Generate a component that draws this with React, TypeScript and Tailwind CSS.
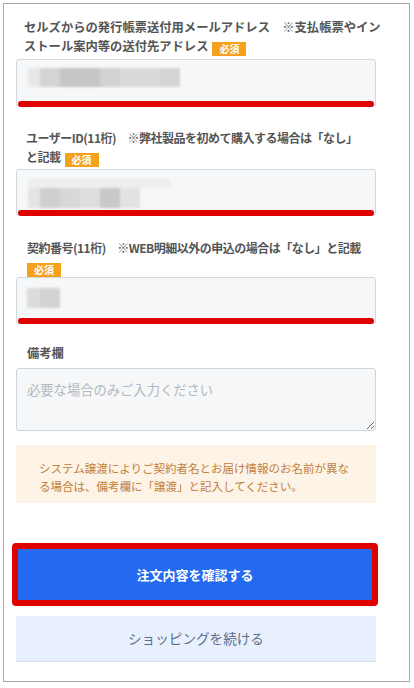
import React from 'react';

function Badge() {
  return (
    <span className="ml-[4px] inline-block h-[14px] bg-[#f5a11c] px-[7px] align-[-2px] text-[10px] font-bold leading-[14px] tracking-normal text-white">
      必須
    </span>
  );
}

function RedBar() {
  return <div className="absolute bottom-[-1px] left-[1px] right-[1px] h-[6px] rounded-[3px] bg-[#df0000]" />;
}

export default function App() {
  return (
    <div className="h-[688px] w-[414px] bg-white pl-[3px] pt-[3px] font-['Noto_Sans_CJK_JP',sans-serif]">
      <div className="h-[679px] w-[407px] border border-[#a9a9a9] pl-[12px] pt-[14px]">
        <div className="flex w-[360px] flex-col">
          {/* Mail address */}
          <p className="h-[38px] whitespace-nowrap pl-[8px] text-[12.3px] font-bold leading-[19px] text-[#555]">
            セルズからの発行帳票送付用メールアドレス　※支払帳票やイン
            <br />
            ストール案内等の送付先アドレス
            <Badge />
          </p>
          <div className="relative mt-[3px] h-[48px] rounded-[3px] border border-[#d3d8dc] bg-[#f5f7f8] pl-[11px] pt-[8px]">
            <div className="flex h-[19px] blur-[1px]">
              <div className="w-[12px] bg-[#e8e8e8]" />
              <div className="w-[20px] bg-[#d4d4d4]" />
              <div className="w-[40px] bg-[#c6c6c6]" />
              <div className="w-[20px] bg-[#d2d2d2]" />
              <div className="w-[40px] bg-[#dadada]" />
              <div className="w-[20px] bg-[#d4d4d4]" />
            </div>
            <RedBar />
          </div>

          {/* User ID */}
          <p className="mt-[21px] h-[38px] whitespace-nowrap pl-[10px] text-[12px] font-bold leading-[19px] tracking-[-0.5px] text-[#555]">
            ユーザーID(11桁)　※弊社製品を初めて購入する場合は「なし」
            <br />
            と記載
            <Badge />
          </p>
          <div className="relative mt-[3px] h-[47px] rounded-[3px] border border-[#d3d8dc] bg-[#f5f7f8] pl-[11px] pt-[9px]">
            <div className="flex flex-col blur-[1px]">
              <div className="h-[9px] w-[142px] bg-[#eeeeee]" />
              <div className="flex h-[20px]">
                <div className="w-[12px] bg-[#e4e4e4]" />
                <div className="w-[20px] bg-[#cfcfcf]" />
                <div className="w-[20px] bg-[#d8d8d8]" />
                <div className="w-[20px] bg-[#dedede]" />
                <div className="w-[20px] bg-[#c9c9c9]" />
                <div className="w-[20px] bg-[#e2e2e2]" />
              </div>
            </div>
            <RedBar />
          </div>

          {/* Contract number */}
          <p className="mt-[22px] h-[38px] whitespace-nowrap pl-[11px] text-[12px] font-bold leading-[19px] tracking-[-0.5px] text-[#555]">
            契約番号(11桁)　※WEB明細以外の申込の場合は「なし」と記載
            <br />
            <span className="-ml-[4px]">
              <Badge />
            </span>
          </p>
          <div className="relative mt-[1px] h-[47px] rounded-[3px] border border-[#d3d8dc] bg-[#f5f7f8] pl-[10px] pt-[10px]">
            <div className="flex h-[20px] blur-[1px]">
              <div className="w-[13px] bg-[#dcdcdc]" />
              <div className="w-[20px] bg-[#d3d3d3]" />
            </div>
            <RedBar />
          </div>

          {/* Remarks */}
          <p className="mt-[20px] h-[19px] pl-[11px] text-[12.3px] font-bold leading-[19px] text-[#555]">備考欄</p>
          <textarea
            readOnly
            placeholder="必要な場合のみご入力ください"
            className="mt-[5px] h-[63px] w-[360px] rounded-[3px] border border-[#cfd4d9] bg-[#f5f7f8] px-[10px] pt-[11px] text-[13.3px] leading-[20px] text-[#555] outline-none placeholder:text-[#b4b8bc]"
          />

          {/* Notice */}
          <div className="mt-[14px] h-[58px] bg-[#fdf3e6] pl-[23px] pt-[14px]">
            <p className="whitespace-nowrap text-[11.5px] leading-[18px] text-[#c2803a]">
              システム譲渡によりご契約者名とお届け情報のお名前が異な
              <br />
              る場合は、備考欄に「譲渡」と記入してください。
            </p>
          </div>

          {/* Buttons */}
          <div className="-ml-[4px] mt-[40px] w-[366px] rounded-[4px] border-[6px] border-[#df0000]">
            <button className="flex h-[51px] w-full items-center justify-center bg-[#236af0] text-[13px] font-bold text-white">
              注文内容を確認する
            </button>
          </div>
          <button className="mt-[10px] flex h-[46px] w-[360px] items-center justify-center border-b border-[#d6e0f0] bg-[#e8f0fd] text-[13.6px] text-[#5d6c88]">
            ショッピングを続ける
          </button>
        </div>
      </div>
    </div>
  );
}
